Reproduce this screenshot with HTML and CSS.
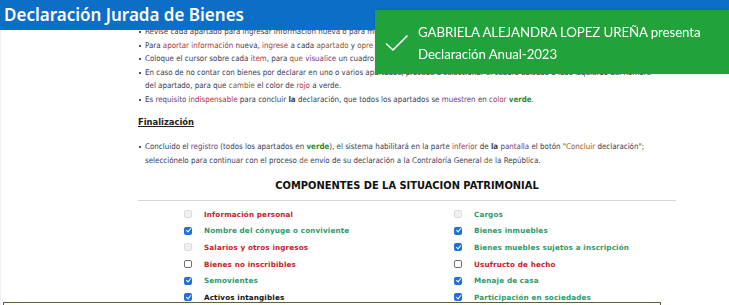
FILE: index.html
```html
<!DOCTYPE html>
<html lang="es">
<head>
<meta charset="utf-8">
<title>Declaración Jurada de Bienes</title>
<link rel="stylesheet" href="styles.css">
</head>
<body>
<div class="page">
  <ul class="rules">
    <li>Revise cada apartado para ingresar información nueva o para modificar la información ya registrada.</li>
    <li>Para <span class="c-r">aportar</span> <span class="c-r">información</span> nueva, <span class="c-r">ingrese</span> a cada <span class="c-b">apartado</span> y <span class="c-b">opre</span> la opción "Crear".</li>
    <li>Coloque el cursor sobre cada <span class="c-r">item</span>, para <span class="c-b">que</span> <span class="c-p">visualice</span> un cuadro de ayuda.</li>
    <li>En caso de no contar con bienes por declarar en uno o varios apartados, procede a seleccionar el cuadro ubicado a lado izquierdo del nombre del apartado, para que <span class="c-b">cambie</span> el color de <span class="c-r">rojo</span> a verde.</li>
    <li>Es <span class="c-p">requisito</span> <span class="c-r">indispensable</span> para concluir <b>la</b> declaración, que todos los apartados se <span class="c-p">muestren</span> en <span class="c-r">color</span> <b class="c-g">verde</b>.</li>
  </ul>

  <h3 class="sub">Finalización</h3>

  <ul class="rules end">
    <li>Concluido el <span class="c-p">registro</span> (todos los apartados en <b class="c-g">verde</b>), el sistema habilitará en la parte <span class="c-r">inferior</span> de <b>la</b> <span class="c-p">pantalla</span> el botón "<span class="c-b">Concluir</span> declaración"; selecciónelo para continuar con el proceso <span class="c-b">de</span> envío de su declaración a la Contraloría General <span class="c-b">de</span> la República.</li>
  </ul>

  <h2 class="title">COMPONENTES DE LA SITUACION PATRIMONIAL</h2>

  <div class="grid">
    <div class="item"><span class="box off"></span><span class="lbl red">Información personal</span></div>
    <div class="item"><span class="box off"></span><span class="lbl green">Cargos</span></div>
    <div class="item"><span class="box on"></span><span class="lbl green">Nombre del cónyuge o conviviente</span></div>
    <div class="item"><span class="box on"></span><span class="lbl green">Bienes inmuebles</span></div>
    <div class="item"><span class="box off"></span><span class="lbl red">Salarios y otros ingresos</span></div>
    <div class="item"><span class="box on"></span><span class="lbl green">Bienes muebles sujetos a inscripción</span></div>
    <div class="item"><span class="box empty"></span><span class="lbl red">Bienes no inscribibles</span></div>
    <div class="item"><span class="box empty"></span><span class="lbl red">Usufructo de hecho</span></div>
    <div class="item"><span class="box on"></span><span class="lbl green">Semovientes</span></div>
    <div class="item"><span class="box on"></span><span class="lbl green">Menaje de casa</span></div>
    <div class="item"><span class="box on"></span><span class="lbl black">Activos intangibles</span></div>
    <div class="item"><span class="box on"></span><span class="lbl green">Participación en sociedades</span></div>
  </div>
</div>

<header class="topbar">
  <h1>Declaración Jurada de Bienes</h1>
</header>

<div class="toast">
  <svg class="check" width="24" height="18" viewBox="0 0 24 18"><path d="M1 9.5 L8 16 L22.5 1.5" fill="none" stroke="#fff" stroke-width="1.6"/></svg>
  <div class="toast-text">GABRIELA ALEJANDRA LOPEZ UREÑA presenta<br>Declaración Anual-2023</div>
</div>

<div class="tip"></div>
</body>
</html>
```

FILE: styles.css
```css
html, body {
  margin: 0;
  padding: 0;
  background: #ffffff;
  overflow: hidden;
}
body {
  width: 729px;
  height: 305px;
  font-family: "DejaVu Sans Condensed", "DejaVu Sans", sans-serif;
  color: #3a3c52;
  border-left: 1px solid #eef0f2;
  box-sizing: border-box;
}

.topbar {
  position: fixed;
  top: 0;
  left: 0;
  right: 0;
  height: 30px;
  background: #0d6ec8;
}
.topbar h1 {
  margin: 0;
  padding-left: 4px;
  font-family: "Noto Sans", sans-serif;
  font-weight: 600;
  font-size: 17px;
  line-height: 29px;
  color: #ffffff;
}

.page {
  padding-left: 137px;
  width: 540px;
}

.rules {
  list-style: none;
  margin: 25px 0 0 0;
  padding: 0;
  width: 522px;
  font-size: 7.9px;
  line-height: 13.5px;
}
.rules li {
  position: relative;
  padding-left: 7px;
}
.rules li::before {
  content: "";
  position: absolute;
  left: 1px;
  top: 6px;
  width: 2px;
  height: 2px;
  background: #555;
}
.rules.end {
  margin-top: 11px;
  line-height: 14px;
}

.c-r { color: #b0343a; }
.c-b { color: #8a5a2a; }
.c-p { color: #6a3a7a; }
.c-g { color: #2e8a2e; }

.sub {
  margin: 9px 0 0 0;
  font-family: "DejaVu Sans", sans-serif;
  font-size: 8.4px;
  line-height: 14px;
  font-weight: bold;
  text-decoration: underline;
  color: #222;
}

.title {
  margin: 11px 0 0 0;
  font-family: "DejaVu Sans", sans-serif;
  font-size: 9.9px;
  line-height: 14px;
  font-weight: bold;
  text-align: center;
  color: #111;
  padding-bottom: 7px;
  border-bottom: 1px solid #d6d6d6;
  width: 538px;
}

.grid {
  display: grid;
  grid-template-columns: 270px 270px;
  padding: 5px 0 0 46px;
  grid-auto-rows: 16.6px;
}
.item {
  display: flex;
  align-items: center;
}
.box {
  width: 8px;
  height: 8px;
  border-radius: 2px;
  box-sizing: border-box;
  margin-right: 12px;
  position: relative;
  flex: none;
}
.box.off {
  background: #f0f0f0;
  border: 1px solid #dcdcdc;
}
.box.empty {
  background: #fff;
  border: 1px solid #707070;
}
.box.on {
  background: #1f6fdc;
}
.box.on::after {
  content: "";
  position: absolute;
  left: 2.6px;
  top: 0.6px;
  width: 2px;
  height: 4.4px;
  border: solid #fff;
  border-width: 0 1.3px 1.3px 0;
  transform: rotate(40deg);
}
.lbl {
  font-family: "DejaVu Sans", sans-serif;
  font-size: 7.2px;
  font-weight: bold;
  letter-spacing: 0.15px;
}
.lbl.red { color: #c8202a; }
.lbl.green { color: #2f9a6a; }
.lbl.black { color: #111; }

.toast {
  position: fixed;
  top: 10px;
  left: 375px;
  right: 0;
  height: 64px;
  background: #21a23a;
  display: flex;
  align-items: center;
  box-shadow: 0 0 2px rgba(0,0,0,0.15);
}
.check {
  margin-left: 10px;
  margin-right: 9px;
  margin-top: 2px;
  flex: none;
}
.toast-text {
  font-family: Lato, "Noto Sans", sans-serif;
  font-size: 13.3px;
  letter-spacing: -0.1px;
  line-height: 22px;
  color: #ffffff;
  white-space: nowrap;
  padding-top: 1px;
}

.tip {
  position: fixed;
  top: 302px;
  left: 3px;
  width: 656px;
  height: 12px;
  background: #fffff4;
  border: 1px solid #5e5e3a;
}
```
